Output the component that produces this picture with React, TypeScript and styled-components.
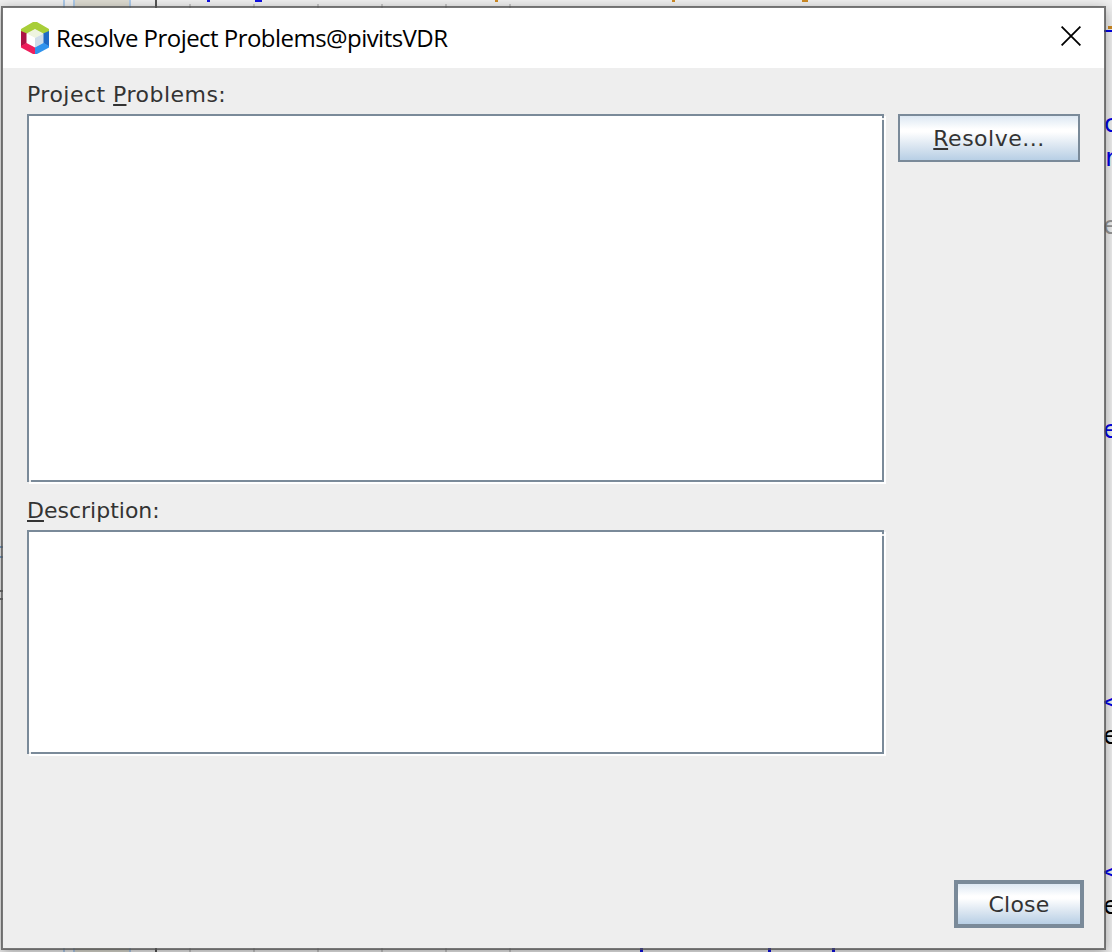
import React from 'react';
import styled, { createGlobalStyle } from 'styled-components';

const GlobalStyle = createGlobalStyle`
  * { box-sizing: border-box; }
  body { margin: 0; background: #f0f0f0; overflow: hidden; }
`;

const Desktop = styled.main`
  position: relative;
  width: 1112px;
  height: 952px;
  overflow: hidden;
  background: #f0f0f0;
`;

const EditorLayer = styled.svg`
  position: absolute;
  inset: 0;
  display: block;
`;

const Dialog = styled.section`
  position: absolute;
  left: 1px;
  top: 6px;
  width: 1105px;
  height: 944px;
  display: flex;
  flex-direction: column;
  border: 2px solid rgba(80, 80, 80, 0.76);
  background: #eeeeee;
  background-clip: padding-box;
  box-shadow: 0 3px 12px rgba(0, 0, 0, 0.34);
`;

const TitleBar = styled.header`
  display: flex;
  align-items: center;
  height: 60px;
  flex: none;
  padding: 0 23px 0 16px;
  background: #ffffff;
`;

const Title = styled.h1`
  flex: 1;
  margin: 0 0 0 5px;
  font: 400 24px/32px 'Open Sans', 'Noto Sans', sans-serif;
  letter-spacing: -0.54px;
  color: #000000;
  white-space: nowrap;
`;

const CloseIcon = styled.button`
  display: flex;
  padding: 0;
  margin-top: -4px;
  border: 0;
  background: none;
`;

const Body = styled.div`
  display: flex;
  flex: 1;
  flex-direction: column;
  padding: 11px 20px 20px 24px;
`;

const Label = styled.label<{ $tracking: number }>`
  height: 32px;
  font: 400 22px/32px 'DejaVu Sans', sans-serif;
  letter-spacing: ${(p) => p.$tracking}px;
  color: #333333;
`;

const Row = styled.div`
  display: flex;
  align-items: flex-start;
  gap: 12px;
  margin-top: 3px;

  & + ${Label} {
    margin-top: 11px;
  }
`;

const Mnemonic = styled.span`
  text-decoration: underline 2px;
  text-underline-offset: 2px;
  text-decoration-skip-ink: none;
`;

const ListBox = styled.div<{ $height: number }>`
  width: 859px;
  height: ${(p) => p.$height}px;
  flex: none;
`;

const PushButton = styled.button<{ $width: number; $tracking: number; $primary?: boolean }>`
  width: ${(p) => p.$width}px;
  height: 48px;
  padding: 2px 0 0;
  border: ${(p) => (p.$primary ? 4 : 2)}px solid #7a8a99;
  background: linear-gradient(#dde8f3 0%, #ffffff 30%, #ffffff 36%, #dbe6f1 68%, #b8cfe5 100%);
  font: 400 22px/32px 'DejaVu Sans', sans-serif;
  letter-spacing: ${(p) => p.$tracking}px;
  color: #333333;
`;

const Footer = styled.footer`
  display: flex;
  justify-content: flex-end;
  margin-top: auto;
`;

function EtchedList({ height }: { height: number }) {
  return (
    <ListBox $height={height}>
      <svg width="859" height={height} shapeRendering="crispEdges">
        <rect x="2" y="2" width="857" height={height - 2} fill="#fff" />
        <path d={`M0 0H857V4H855V2H2V${height - 2}H0Z`} fill="#7a8a99" />
        <path d={`M855 6H857V${height - 2}H4V${height - 4}H855Z`} fill="#7a8a99" />
        <path d={`M855 4h2v2h-2zM2 ${height - 4}h2v2h-2z`} fill="#eee" />
      </svg>
    </ListBox>
  );
}

function Cube() {
  return (
    <svg width="32" height="34" viewBox="0 0 32 34">
      <path d="M14 1H18L30 8V11L24 13 16 8.5 8 13 2 11V8Z" fill="#a8ce38" />
      <path d="M2 10 8 12.5V22L2 25.5Z" fill="#ad1445" />
      <path d="M2 25 8 21.5 16 26V33H14L2 26.5Z" fill="#ee1f5c" />
      <path d="M30 10 24 12.5V22L30 25.5Z" fill="#1f69c4" />
      <path d="M30 25 24 21.5 16 26V33H18L30 26.5Z" fill="#3093ed" />
      <path d="M16 8 24.5 12.5 16 17 7.500 12.5Z" fill="#eef4df" />
      <path d="M7.500 12.500 16 17V26.500L7.500 22Z" fill="#ffffff" />
      <path d="M24.500 12.500 16 17V26.500L24.500 22Z" fill="#cfdde8" />
    </svg>
  );
}

const stripes = [190, 254, 318, 382, 446, 510];

const codeGlyphs = [
  { text: 'c', y: 132, color: '#0000e6' },
  { text: 'r', y: 166, color: '#0000e6' },
  { text: 'e', y: 234, color: '#969696' },
  { text: 'e', y: 438, color: '#0000e6' },
  { text: '<', y: 710, color: '#0000e6' },
  { text: 'e', y: 744, color: '#000' },
  { text: '<', y: 880, color: '#0000e6' },
  { text: 'e', y: 914, color: '#000' },
];

function Editor() {
  return (
    <EditorLayer width="1112" height="952">
      <g shapeRendering="crispEdges">
        <path d="M74 0H130V952H74Z" fill="#dedcd2" />
        <path d="M63 0h2v952h-2zM73 0h2v952h-2zM129 0h2v952h-2z" fill="#aecbea" />
        <path d="M155 0h2v952h-2z" fill="#555" />
        {stripes.map((x) => (
          <path key={x} d={`M${x - 1} 4h2v948h-2z`} fill="#c8c8c8" />
        ))}
        <path d="M207 0h3v2h-3zM255 0h7v2h-7zM640 948h3v4h-3zM768 948h3v4h-3zM832 948h3v4h-3z" fill="#1010e6" />
        <path d="M495 0h3v2h-3zM672 0h3v2h-3zM802 0h6v2h-6zM1108 26h4v3h-4z" fill="#ce8a24" />
        <path d="M1104 30h8v2h-8z" fill="#0000e6" />
        <path d="M0 546h3v2h-3zM0 556h3v2h-3z" fill="#7da5cf" />
        <path d="M0 590h3v2h-3zM0 598h3v2h-3z" fill="#777" />
      </g>
      <g fontFamily="'DejaVu Sans Mono', monospace" fontSize="25">
        {codeGlyphs.map((g) => (
          <text key={g.y} x="1103" y={g.y} fill={g.color}>{g.text}</text>
        ))}
      </g>
    </EditorLayer>
  );
}

export default function App() {
  return (
    <Desktop>
      <GlobalStyle />
      <Editor />
      <Dialog>
        <TitleBar>
          <Cube />
          <Title>Resolve Project Problems@pivitsVDR</Title>
          <CloseIcon aria-label="Close window">
            <svg width="20" height="20" viewBox="0 0 20 20">
              <path d="M.6.6 19.4 19.4M19.4.6.6 19.4" stroke="#000" strokeWidth="1.8" />
            </svg>
          </CloseIcon>
        </TitleBar>
        <Body>
          <Label $tracking={0.48}>Project <Mnemonic>P</Mnemonic>roblems:</Label>
          <Row>
            <EtchedList height={370} />
            <PushButton $width={182} $tracking={0.5}><Mnemonic>R</Mnemonic>esolve...</PushButton>
          </Row>
          <Label $tracking={0}>
            <Mnemonic>D</Mnemonic>escription:
          </Label>
          <Row>
            <EtchedList height={226} />
          </Row>
          <Footer>
            <PushButton $width={130} $tracking={0.2} $primary>Close</PushButton>
          </Footer>
        </Body>
      </Dialog>
    </Desktop>
  );
}
